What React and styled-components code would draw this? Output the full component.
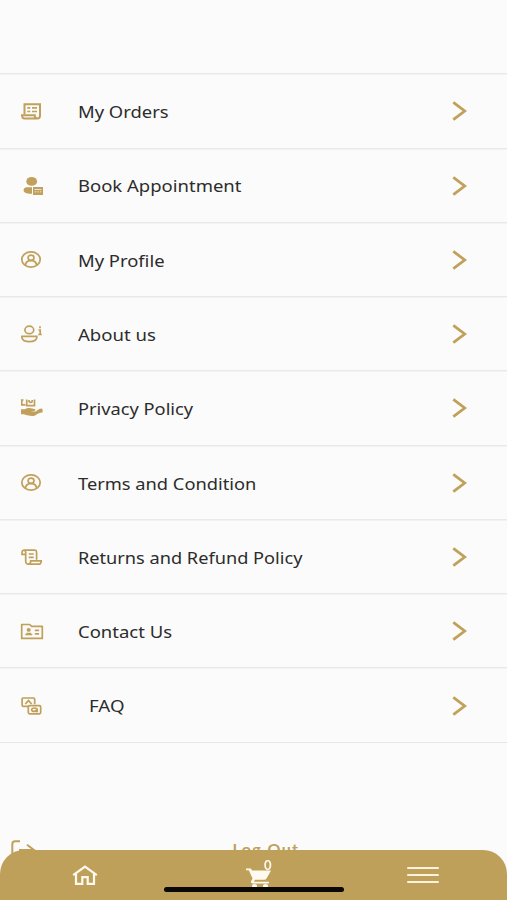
import React from "react";
import styled, { createGlobalStyle } from "styled-components";

export default function App() {
  return (
    <Screen>
      <GlobalStyle />
      <Header />
      <Menu>
        {items.map(({ label, icon, indent, stretch }) => (
          <Row key={label}>
            <Icon viewBox="0 0 24 20">{icon}</Icon>
            <Label $indent={indent}>
              <Stretch $x={stretch}>{label}</Stretch>
            </Label>
            <Chevron viewBox="0 0 16 20">
              <path d="M1.300 1.300 12.700 10 1.300 18.700" />
            </Chevron>
          </Row>
        ))}
      </Menu>
      <LogOut>
        <LogOutIcon viewBox="0 0 26 20">
          <path d="M10 1.200H5.200Q2.300 1.200 2.300 4v12q0 2.800 2.900 2.800H10M9 10h15M17 4.800 24 10l-7 5.200" />
        </LogOutIcon>
        <LogOutText>Log Out</LogOutText>
      </LogOut>
      <TabBar>
        <Tab>
          <HomeIcon viewBox="0 0 26 20">
            <path d="M1.200 10.200 13 1.500l11.800 8.700M4 8.500v10.300h6.300v-6.600h5.400v6.600H22V8.500" />
          </HomeIcon>
        </Tab>
        <Tab>
          <CartIcon viewBox="0 0 26 20">
            <path d="M0 .5h4.800l1.300 2H25l-4.600 8.300q-.6 1-2 1H9l-1.200 2h15v1.700H7q-2.700-.4-1.800-2.500L6.600 10.600 2.800 2.300H0z" />
            <ellipse cx="8.500" cy="18" rx="2.600" ry="2" />
            <ellipse cx="19.500" cy="18" rx="2.600" ry="2" />
          </CartIcon>
          <Badge>0</Badge>
        </Tab>
        <Tab>
          <Bars>
            <Bar />
            <Bar />
            <Bar />
          </Bars>
        </Tab>
        <HomeIndicator />
      </TabBar>
    </Screen>
  );
}

const personIcon = (
  <>
    <ellipse cx="11" cy="9.500" rx="9.200" ry="7.700" />
    <ellipse cx="11" cy="7.800" rx="3" ry="2.600" />
    <path d="M5.300 15q.6-3.600 4-4.400h3.400q3.400.8 4 4.400" />
  </>
);

const items = [
  {
    label: "My Orders",
    stretch: 1.15,
    icon: (
      <>
        <path
          strokeWidth="2"
          d="M4.500 13V3.300h15.500v11.500q0 2.700-2.600 2.700H4.400q-2.300 0-2.400-3.200h12.700q0 3.200 2.800 3.200"
        />
        <path d="M7.300 6.800h3M12 6.800h5M7.300 10.500h3M12 10.500h5" />
      </>
    ),
  },
  {
    label: "Book Appointment",
    stretch: 1.155,
    icon: (
      <g fill="#c0a05a" stroke="none">
        <ellipse cx="11.700" cy="5.400" rx="5.400" ry="4.300" />
        <path d="M6.200 11.300h5.800v6.400H9q-5.500-.5-5.500-3.700 0-2.200 2.700-2.700z" />
        <path
          fillRule="evenodd"
          d="M13 11h10v8H13zM14.500 13.200v.9h7v-.9zM14.700 15.400v.8h1.500v-.8zM17.400 15.400v.8h1.500v-.8zM20 15.400v.8h1.400v-.8z"
        />
      </g>
    ),
  },
  { label: "My Profile", stretch: 1.15, icon: personIcon },
  {
    label: "About us",
    stretch: 1.16,
    icon: (
      <>
        <ellipse cx="9.300" cy="5.900" rx="4.400" ry="3.700" />
        <path d="M1.900 12.300h14.900v1.500q-1 3.900-7.400 3.900t-7.500-3.900z" />
        <path d="M20 2.300v1.900M18.500 6h1.700v4.500M18.300 10.500h3.500" />
      </>
    ),
  },
  {
    label: "Privacy Policy",
    stretch: 1.14,
    icon: (
      <>
        <path d="M1.800 1.500v5.300h3.600M.9 2h2.600M6.700 1.500v6.200h7.800V1.500M9 2v1.600q1.600 1.600 3.200 0V2" />
        <path
          fill="#c0a05a"
          stroke="none"
          d="M1 11.300h4q2-1.600 4.500-1.300 2.500.8 5 .9 1.500.7.600 1.900l-4.400.4 5 .2 3.600-2.300q2.500-1.400 3.300.1v3.300h-1.200q-3.500.8-5.900 2.700-3 1.500-6.800.4-3-.7-4.700-1.400H1z"
        />
      </>
    ),
  },
  { label: "Terms and Condition", stretch: 1.142, icon: personIcon },
  {
    label: "Returns and Refund Policy",
    stretch: 1.136,
    icon: (
      <>
        <path d="M5.500 7.300H2V5q.2-1.800 2-1.800h10.800q1.800.2 1.800 2v7.600M4 3.200q1.700.2 1.700 2v9.600q.2 2.300 2.700 2.300h10.800q2-.3 2-3.200H10.700q0 3-2.300 3.200" />
        <path d="M8.700 7h5M8.700 10.300h5" />
      </>
    ),
  },
  {
    label: "Contact Us",
    stretch: 1.155,
    icon: (
      <>
        <path d="M1.700 3.500h8l2 1.900h10.600v12H1.700z" strokeLinejoin="round" />
        <ellipse cx="8.700" cy="8.900" rx="1.200" ry="1" fill="#c0a05a" />
        <path d="M5.300 13.500h7M6.500 12.600h4.600M14.800 9.300h4.300M14.800 12.900h4.300" />
      </>
    ),
  },
  {
    label: "FAQ",
    indent: 11,
    stretch: 1.17,
    icon: (
      <>
        <path d="M8 10.300H3.300q-1.200 0-1.200-1.200V3.200Q2.100 2 3.300 2h10.200q1.200 0 1.200 1.200v5" />
        <path d="M5.300 8 8.500 4.600l3.200 3.400" />
        <rect x="8.300" y="9.600" width="12.400" height="8.200" rx="1.300" />
        <ellipse cx="14.500" cy="13.700" rx="2.800" ry="1.700" />
        <path d="M15 14l2.700 2.200" />
      </>
    ),
  },
];

const GlobalStyle = createGlobalStyle`
  body {
    margin: 0;
    background: #fbfbfb;
  }
`;

const Screen = styled.div`
  display: flex;
  flex-direction: column;
  height: 900px;
  overflow: hidden;
  background: #fbfbfb;
  font-family: "Noto Sans", "Open Sans", sans-serif;
  color: #2c2c2c;
`;

const Header = styled.header`
  flex: none;
  height: 73.3px;
`;

const Menu = styled.nav`
  flex: none;
  border-bottom: 1px solid #e6e6e6;
`;

const Row = styled.div`
  display: flex;
  align-items: center;
  box-sizing: border-box;
  height: 74.27px;
  padding: 2px 39.5px 0 20px;
  background: linear-gradient(#e9e9e9, #e9e9e9) 0 0 / 100% 1.5px no-repeat;
`;

const Icon = styled.svg`
  flex: none;
  width: 24px;
  height: 20px;
  fill: none;
  stroke: #c0a05a;
  stroke-width: 1.7;
`;

const Label = styled.div`
  flex: 1;
  padding: 1.6px 0 0 ${({ $indent = 0 }) => 34 + $indent}px;
  font-size: 16px;
  line-height: 24px;
  white-space: nowrap;
`;

const Stretch = styled.span`
  display: inline-block;
  transform: scaleX(${({ $x }) => $x});
  transform-origin: 0 50%;
`;

const Chevron = styled.svg`
  flex: none;
  width: 16px;
  height: 20px;
  fill: none;
  stroke: #c0a05a;
  stroke-width: 2.8;
`;

const LogOut = styled.div`
  display: grid;
  grid-template-columns: 1fr auto 1fr;
  align-items: center;
  flex: none;
  height: 24px;
  margin-top: 95px;
  padding: 0 10px;
  color: #c0a05a;
`;

const LogOutIcon = styled.svg`
  width: 26px;
  height: 20px;
  fill: none;
  stroke: currentColor;
  stroke-width: 2;
`;

const LogOutText = styled.span`
  padding: 0 0 2px 25px;
  font-family: Lato, "Noto Sans", sans-serif;
  font-size: 16px;
  font-weight: 700;
  line-height: 16px;
  letter-spacing: 1.4px;
`;

const TabBar = styled.footer`
  position: fixed;
  left: 0;
  bottom: 0;
  display: grid;
  grid-template-columns: repeat(3, 1fr);
  width: 507px;
  height: 50px;
  border-radius: 24px 24px 0 0;
  background: #bea05a;
`;

const Tab = styled.div`
  position: relative;
  display: flex;
  justify-content: center;
  align-items: center;
  color: #fffaf0;
`;

const HomeIcon = styled.svg`
  width: 26px;
  height: 20px;
  fill: none;
  stroke: currentColor;
  stroke-width: 2.2;
`;

const CartIcon = styled.svg`
  width: 26px;
  height: 20px;
  margin: 5px 0 0 10px;
  fill: currentColor;
`;

const Badge = styled.span`
  position: absolute;
  top: 9px;
  left: 95px;
  font-family: Lato, "Noto Sans", sans-serif;
  font-size: 13px;
  font-weight: 700;
  line-height: 13px;
`;

const Bars = styled.div`
  display: grid;
  gap: 5px;
  width: 32px;
`;

const Bar = styled.span`
  height: 2px;
  border-radius: 1px;
  background: #fff3dc;
`;

const HomeIndicator = styled.div`
  position: absolute;
  left: 164px;
  bottom: 8px;
  width: 180px;
  height: 5px;
  border-radius: 3px;
  background: #0b0905;
`;
